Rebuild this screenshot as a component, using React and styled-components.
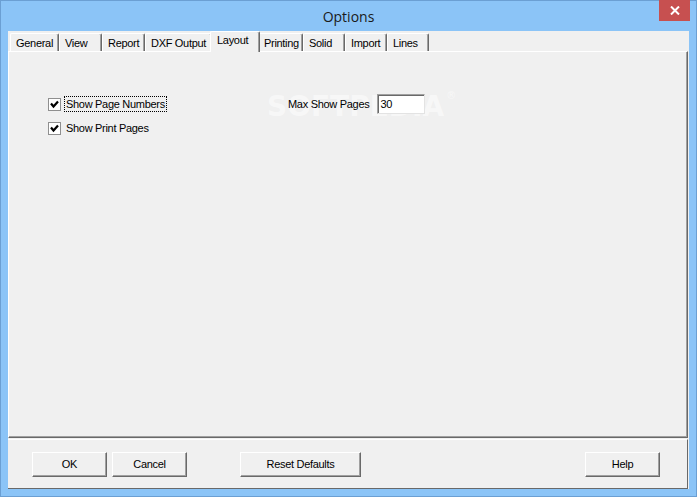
import React from "react";
import styled, { createGlobalStyle } from "styled-components";

const Global = createGlobalStyle`
  html, body { margin: 0; padding: 0; background: #8bc4f7; }
  body { width: 697px; height: 497px; overflow: hidden; }
  #root { width: 697px; height: 497px; }
`;

const Frame = styled.div`
  position: relative;
  box-sizing: border-box;
  width: 697px;
  height: 497px;
  background: #8bc4f7;
  border: 1px solid #6b9fd3;
  display: flex;
  flex-direction: column;
  padding: 0 7px 7px 7px;
  font-family: "Liberation Sans", Arial, sans-serif;
  font-size: 11px;
  letter-spacing: -0.3px;
  color: #000;
`;

const TitleBar = styled.div`
  height: 30px;
  display: flex;
  align-items: center;
  justify-content: center;
  font-family: "Open Sans", "Noto Sans", sans-serif;
  font-size: 14px;
  letter-spacing: 0;
  color: #1a1a1a;
  padding-top: 1px;
  box-sizing: border-box;
`;

const CloseButton = styled.div`
  position: absolute;
  top: -1px;
  right: 6px;
  width: 31px;
  height: 21px;
  background: #c75050;
  display: flex;
  align-items: center;
  justify-content: center;
`;

const Client = styled.div`
  flex: 1;
  background: #f0f0f0;
  display: flex;
  flex-direction: column;
`;

const TabStrip = styled.div`
  height: 20px;
  display: flex;
  align-items: flex-end;
  padding-left: 2px;
  position: relative;
  z-index: 1;
`;

const Tab = styled.div`
  box-sizing: border-box;
  width: ${(p) => p.$w}px;
  height: ${(p) => (p.$active ? 21 : 18)}px;
  margin: ${(p) => (p.$active ? "0 -2px -1px -2px" : "0")};
  background: #f0f0f0;
  border-top: 1px solid #ffffff;
  border-left: 1px solid #ffffff;
  border-right: 1px solid #696969;
  box-shadow: inset -1px 0 0 #a0a0a0;
  border-radius: 2px 2px 0 0;
  display: flex;
  align-items: ${(p) => (p.$active ? "flex-start" : "center")};
  padding: ${(p) => (p.$active ? "2px 0 0 6px" : "1px 0 0 5px")};
  white-space: nowrap;
  position: relative;
  z-index: ${(p) => (p.$active ? 2 : 1)};
`;

const TabPage = styled.div`
  position: relative;
  box-sizing: border-box;
  height: 387px;
  margin-right: 1px;
  border-top: 1px solid #ffffff;
  border-left: 1px solid #ffffff;
  border-right: 1px solid #696969;
  border-bottom: 1px solid #696969;
  box-shadow: inset -1px -1px 0 #a0a0a0;
  display: flex;
  padding: 44px 0 0 39px;
`;

const LeftColumn = styled.div`
  width: 240px;
  display: flex;
  flex-direction: column;
  gap: 8px;
`;

const CheckRow = styled.div`
  display: flex;
  align-items: center;
  height: 16px;
  gap: 3px;
`;

const Box = styled.div`
  box-sizing: border-box;
  width: 13px;
  height: 13px;
  background: #fff;
  border: 1px solid #8f8f8f;
  display: flex;
  align-items: center;
  justify-content: center;
`;

const Label = styled.span`
  box-sizing: border-box;
  height: 16px;
  line-height: 14px;
  padding: 0 1px;
  border: 1px ${(p) => (p.$focus ? "dotted #000" : "solid transparent")};
`;

const RightColumn = styled.div`
  display: flex;
  align-items: center;
  height: 20px;
  margin-top: -2px;
  gap: 8px;
  position: relative;
  z-index: 1;
`;

const Spin = styled.div`
  box-sizing: border-box;
  width: 48px;
  height: 20px;
  background: #fff;
  border-top: 1px solid #a0a0a0;
  border-left: 1px solid #a0a0a0;
  border-right: 1px solid #e3e3e3;
  border-bottom: 1px solid #e3e3e3;
  box-shadow: inset 1px 1px 0 #696969;
  padding: 2px 0 0 2px;
  line-height: 14px;
`;

const Watermark = styled.div`
  position: absolute;
  left: 258px;
  top: 38px;
  font-family: "DejaVu Sans", sans-serif;
  font-weight: bold;
  font-size: 28px;
  letter-spacing: 0;
  color: rgba(255, 255, 255, 0.5);
  pointer-events: none;
  sup {
    font-size: 10px;
    font-weight: normal;
    vertical-align: top;
    margin-left: 2px;
  }
`;

const ButtonBar = styled.div`
  flex: 1;
  margin-top: 1px;
  margin-right: 1px;
  border-top: 1px solid #ffffff;
  border-bottom: 1px solid #696969;
  border-right: 1px solid #696969;
  display: flex;
  align-items: flex-start;
  padding: 12px 27px 0 24px;
`;

const Button = styled.button`
  box-sizing: border-box;
  width: ${(p) => p.$w || 75}px;
  height: 25px;
  margin-left: ${(p) => p.$ml || "0"};
  background: #f0f0f0;
  border: none;
  border-top: 1px solid #ffffff;
  border-left: 1px solid #ffffff;
  border-right: 1px solid #696969;
  border-bottom: 1px solid #696969;
  box-shadow: inset -1px -1px 0 #a0a0a0;
  font-family: "Liberation Sans", Arial, sans-serif;
  font-size: 11px;
  letter-spacing: -0.3px;
  color: #000;
  padding: 0 0 1px 0;
`;

const tabs = [
  { t: "General", w: 49 },
  { t: "View", w: 43 },
  { t: "Report", w: 43 },
  { t: "DXF Output", w: 67 },
  { t: "Layout", w: 50, active: true },
  { t: "Printing", w: 45 },
  { t: "Solid", w: 42 },
  { t: "Import", w: 42 },
  { t: "Lines", w: 42 },
];

const Check = () => (
  <svg width="9" height="9" viewBox="0 0 9 9">
    <path d="M1 3.5 L3.5 6.5 L8 1.5" fill="none" stroke="#000" strokeWidth="2.2" />
  </svg>
);

export default function App() {
  return (
    <>
      <Global />
      <Frame>
        <TitleBar>Options</TitleBar>
        <CloseButton>
          <svg width="10" height="9" viewBox="0 0 10 9">
            <path d="M1 0.5 L9 8.5 M9 0.5 L1 8.5" stroke="#fff" strokeWidth="2" />
          </svg>
        </CloseButton>
        <Client>
          <TabStrip>
            {tabs.map((tb) => (
              <Tab key={tb.t} $w={tb.w} $active={tb.active}>
                {tb.t}
              </Tab>
            ))}
          </TabStrip>
          <TabPage>
            <Watermark>
              SOFTPEDIA<sup>®</sup>
            </Watermark>
            <LeftColumn>
              <CheckRow>
                <Box>
                  <Check />
                </Box>
                <Label $focus>Show Page Numbers</Label>
              </CheckRow>
              <CheckRow>
                <Box>
                  <Check />
                </Box>
                <Label>Show Print Pages</Label>
              </CheckRow>
            </LeftColumn>
            <RightColumn>
              <span>Max Show Pages</span>
              <Spin>30</Spin>
            </RightColumn>
          </TabPage>
          <ButtonBar>
            <Button>OK</Button>
            <Button $ml="5px">Cancel</Button>
            <Button $w={121} $ml="53px">
              Reset Defaults
            </Button>
            <Button $ml="auto">Help</Button>
          </ButtonBar>
        </Client>
      </Frame>
    </>
  );
}
